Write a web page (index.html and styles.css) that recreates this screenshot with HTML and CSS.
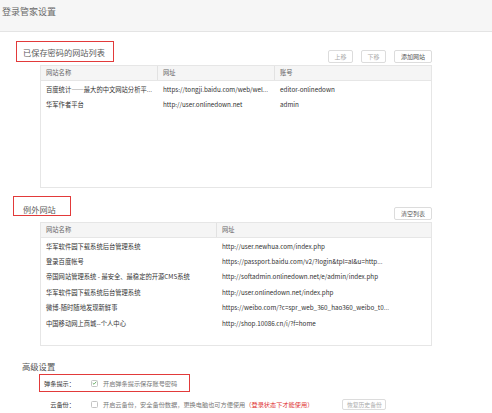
FILE: index.html
```html
<!DOCTYPE html>
<html lang="zh-CN">
<head>
<meta charset="utf-8">
<title>登录管家设置</title>
<link rel="stylesheet" href="styles.css">
</head>
<body>
<header class="top"><h1 class="top-title">登录管家设置</h1></header>
<main class="content">
  <section class="sec sec-saved">
    <div class="sec-head">
      <h2 class="sec-title mark mark-saved">已保存密码的网站列表</h2>
      <div class="btns">
        <button class="btn btn-sm is-disabled">上移</button>
        <button class="btn btn-sm is-disabled">下移</button>
        <button class="btn btn-md">添加网站</button>
      </div>
    </div>
    <div class="grid grid-saved">
      <div class="row head"><div class="c">网站名称</div><div class="c">网址</div><div class="c">账号</div></div>
      <div class="row"><div class="c">百度统计——最大的中文网站分析平...</div><div class="c">https://tongji.baidu.com/web/wel...</div><div class="c">editor-onlinedown</div></div>
      <div class="row"><div class="c">华军作者平台</div><div class="c">http://user.onlinedown.net</div><div class="c">admin</div></div>
    </div>
  </section>

  <section class="sec sec-except">
    <div class="sec-head">
      <h2 class="sec-title mark mark-except">例外网站</h2>
      <div class="btns">
        <button class="btn btn-md">清空列表</button>
      </div>
    </div>
    <div class="grid grid-except">
      <div class="row head"><div class="c">网站名称</div><div class="c">网址</div></div>
      <div class="row"><div class="c">华军软件园下载系统后台管理系统</div><div class="c">http://user.newhua.com/index.php</div></div>
      <div class="row"><div class="c">登录百度帐号</div><div class="c">https://passport.baidu.com/v2/?login&amp;tpl=al&amp;u=http...</div></div>
      <div class="row"><div class="c">帝国网站管理系统 - 最安全、最稳定的开源CMS系统</div><div class="c">http://softadmin.onlinedown.net/e/admin/index.php</div></div>
      <div class="row"><div class="c">华军软件园下载系统后台管理系统</div><div class="c">http://user.onlinedown.net/index.php</div></div>
      <div class="row"><div class="c">微博-随时随地发现新鲜事</div><div class="c">https://weibo.com/?c=spr_web_360_hao360_weibo_t0...</div></div>
      <div class="row"><div class="c">中国移动网上商城--个人中心</div><div class="c">http://shop.10086.cn/i/?f=home</div></div>
    </div>
  </section>

  <section class="sec sec-adv">
    <h2 class="adv-title">高级设置</h2>
    <div class="opt mark">
      <span class="opt-label">弹条提示：</span>
      <span class="chk is-checked"><svg viewBox="0 0 8 8" width="6" height="6"><path d="M1.2 4.2 L3.2 6 L6.9 1.8" fill="none" stroke="#3d9a3d" stroke-width="1.2"/></svg></span>
      <span class="opt-text">开启弹条提示保存账号密码</span>
    </div>
    <div class="opt">
      <span class="opt-label">云备份：</span>
      <span class="chk"></span>
      <span class="opt-text">开启云备份，安全备份数据，更换电脑也可方便使用</span>
      <span class="opt-warn">（登录状态下才能使用）</span>
      <button class="btn btn-restore is-disabled">恢复历史备份</button>
    </div>
  </section>
</main>
</body>
</html>
```

FILE: styles.css
```css
* { box-sizing: border-box; }
html, body { margin: 0; padding: 0; }
body {
  width: 492px;
  height: 413px;
  overflow: hidden;
  background: #fff;
  font-family: "Noto Sans CJK SC", "Microsoft YaHei", sans-serif;
  color: #333;
}
h1, h2 { margin: 0; font-weight: normal; }

.top {
  height: 32px;
  background: #f6f6f6;
  border-bottom: 1px solid #e4e4e4;
  padding-left: 2px;
}
.top-title {
  font-size: 9px;
  line-height: 24px;
  color: #6a6a6a;
}

.sec { width: 432px; }

.sec-head {
  display: flex;
  justify-content: space-between;
  align-items: flex-end;
}
.sec-saved .sec-head { margin-top: 9px; }
.sec-except .sec-head { margin-top: 8px; }

.mark { border: 1px solid #e23a3a; }

.sec-title {
  font-size: 8.2px;
  color: #5a5a5a;
  display: flex;
  align-items: center;
}
.mark-saved {
  margin-left: 16px;
  height: 21px;
  width: 98px;
  padding-left: 6px;
  margin-bottom: 1px;
}
.mark-except {
  margin-left: 13px;
  height: 20px;
  width: 58px;
  padding-left: 9px;
  padding-top: 5px;
  margin-bottom: 4px;
}

.btns { display: flex; gap: 8px; }
.btn {
  font-family: inherit;
  font-size: 6px;
  height: 13px;
  padding: 0;
  background: #fff;
  border: 1px solid #dcdcdc;
  border-radius: 2px;
  color: #555;
  line-height: 11px;
}
.btn-sm { width: 25px; }
.btn-md { width: 38px; }
.btn.is-disabled { color: #aaa; }

.grid {
  margin-left: 40px;
  margin-top: 2px;
  border: 1px solid #e6e6e6;
  font-size: 6.3px;
  color: #333;
}
.grid-saved { height: 123px; }
.grid-except { height: 124px; }

.row {
  display: grid;
  height: 15.4px;
  line-height: 15.4px;
}
.grid-saved .row { grid-template-columns: 117px 117px 1fr; }
.grid-except .row { grid-template-columns: 176px 1fr; }

.row.head {
  height: 15px;
  line-height: 14px;
  background: #f5f5f5;
  border-bottom: 1px solid #e6e6e6;
  color: #666;
}
.row.head .c { border-right: 1px solid #e2e2e2; }
.row.head .c:last-child { border-right: 0; }
.row .c {
  padding-left: 5px;
  white-space: nowrap;
  overflow: hidden;
}
.row.head + .row { margin-top: 0.6px; }

.adv-title {
  font-size: 8.3px;
  line-height: 12px;
  color: #555;
  margin-top: 14px;
  padding-left: 22px;
}

.opt {
  display: flex;
  align-items: center;
  height: 18.3px;
  margin-left: 39px;
  font-size: 6.2px;
  white-space: nowrap;
}
.opt.mark {
  width: 151px;
  margin-top: 2px;
}
.opt:not(.mark) {
  border: 1px solid transparent;
  margin-top: 3px;
}
.opt-label {
  width: 35px;
  text-align: right;
  color: #333;
  flex: none;
}
.chk {
  width: 7px;
  height: 7px;
  margin-left: 16px;
  border: 1px solid #c4c4c4;
  border-radius: 1.5px;
  background: #fff;
  display: inline-flex;
  align-items: center;
  justify-content: center;
  flex: none;
}
.opt-text {
  margin-left: 5px;
  color: #777;
}
.opt-warn { color: #e03434; }
.btn-restore {
  width: 44px;
  height: 11px;
  line-height: 9px;
  margin-left: 29px;
  font-size: 5.8px;
}
```
